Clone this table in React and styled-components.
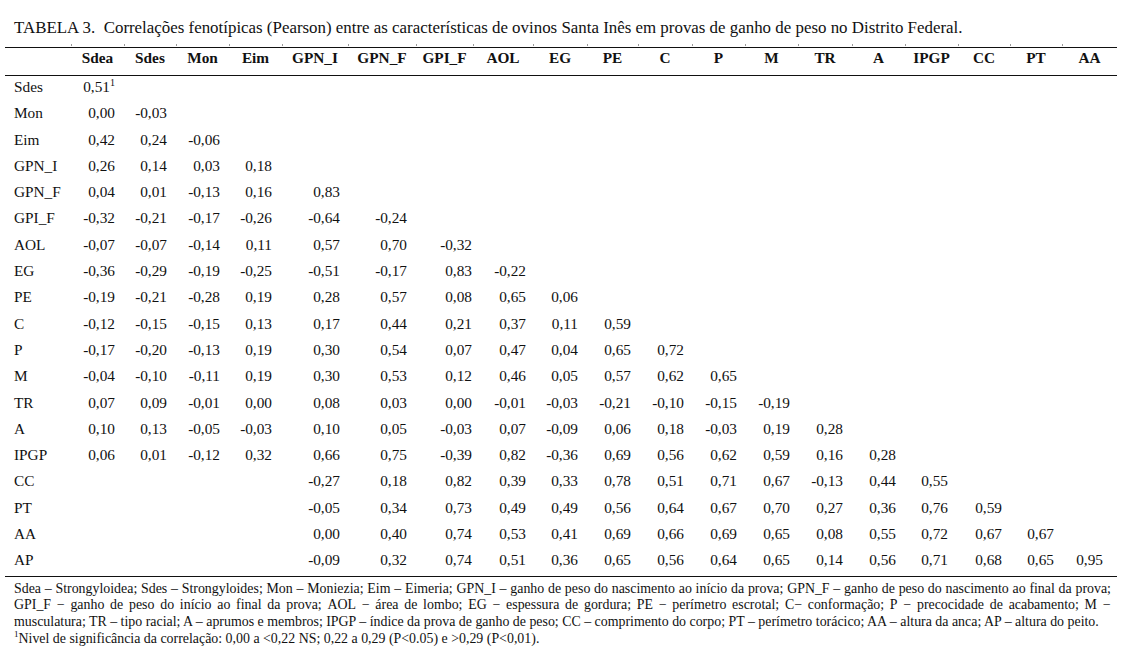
import React from 'react';
import styled, { createGlobalStyle } from 'styled-components';

const serif = `"Liberation Serif", "Times New Roman", Times, serif`;

const GlobalStyle = createGlobalStyle`
  html, body {
    margin: 0;
    padding: 0;
    background: #ffffff;
  }
  body {
    font-family: ${serif};
    color: #111;
  }
`;

const Page = styled.div`
  width: 1124px;
  height: 659px;
  padding-top: 18px;
  box-sizing: border-box;
  overflow: hidden;
  font-family: ${serif};
`;

const Title = styled.div`
  margin-left: 14px;
  font-size: 16.9px;
  line-height: 20px;
  white-space: nowrap;
`;

const Table = styled.table`
  margin: 9px 0 0 5px;
  width: 1112px;
  border-collapse: collapse;
  table-layout: fixed;
  font-family: ${serif};
  font-size: 15.3px;
`;

const HeadCell = styled.th`
  position: relative;
  height: 26px;
  padding: 1px 0 0;
  vertical-align: top;
  line-height: 17px;
  font-weight: bold;
  text-align: center;
  border-top: 1.5px solid #111;
  border-bottom: 1.5px solid #111;
  white-space: nowrap;

  &::before {
    content: '';
    display: ${(p) => (p.$tick ? 'block' : 'none')};
    position: absolute;
    left: 0;
    top: -4px;
    width: 1px;
    height: 2px;
    background: #9a9a9a;
  }
`;

const Row = styled.tr`
  & > td {
    border-bottom: ${(p) => (p.$last ? '1px solid #111' : 'none')};
  }
`;

const Label = styled.td`
  height: 24.3px;
  padding: 2px 0 0 9px;
  vertical-align: top;
  line-height: 17px;
  text-align: left;
  white-space: nowrap;
`;

const Value = styled.td`
  height: 24.3px;
  padding: 2px ${(p) => p.$pad}px 0 0;
  vertical-align: top;
  line-height: 17px;
  text-align: right;
  white-space: nowrap;
`;

const Sup = styled.sup`
  font-size: ${(p) => (p.$small ? 9 : 10)}px;
  line-height: 0;
  vertical-align: 6px;
`;

const Notes = styled.div`
  margin: 4px 0 0 14px;
  width: 1097px;
  font-size: 13.9px;
  line-height: 16.7px;
`;

const JustifiedLine = styled.div`
  display: flex;
  justify-content: space-between;
  white-space: nowrap;
`;

const NoteLine = styled.div`
  white-space: nowrap;
`;

const columns = [
  { name: 'Sdea', width: 53, pad: 9 },
  { name: 'Sdes', width: 52, pad: 9 },
  { name: 'Mon', width: 53, pad: 9 },
  { name: 'Eim', width: 53, pad: 10 },
  { name: 'GPN_I', width: 66, pad: 8 },
  { name: 'GPN_F', width: 68, pad: 9 },
  { name: 'GPI_F', width: 57, pad: 1 },
  { name: 'AOL', width: 60, pad: 7 },
  { name: 'EG', width: 54, pad: 9 },
  { name: 'PE', width: 51, pad: 7 },
  { name: 'C', width: 54, pad: 8 },
  { name: 'P', width: 53, pad: 8 },
  { name: 'M', width: 53, pad: 8 },
  { name: 'TR', width: 54, pad: 9 },
  { name: 'A', width: 53, pad: 9 },
  { name: 'IPGP', width: 53, pad: 10 },
  { name: 'CC', width: 52, pad: 8 },
  { name: 'PT', width: 52, pad: 8 },
  { name: 'AA', width: 55, pad: 14 },
];

const rows = [
  ['Sdes', ['0,51']],
  ['Mon', ['0,00', '-0,03']],
  ['Eim', ['0,42', '0,24', '-0,06']],
  ['GPN_I', ['0,26', '0,14', '0,03', '0,18']],
  ['GPN_F', ['0,04', '0,01', '-0,13', '0,16', '0,83']],
  ['GPI_F', ['-0,32', '-0,21', '-0,17', '-0,26', '-0,64', '-0,24']],
  ['AOL', ['-0,07', '-0,07', '-0,14', '0,11', '0,57', '0,70', '-0,32']],
  ['EG', ['-0,36', '-0,29', '-0,19', '-0,25', '-0,51', '-0,17', '0,83', '-0,22']],
  ['PE', ['-0,19', '-0,21', '-0,28', '0,19', '0,28', '0,57', '0,08', '0,65', '0,06']],
  ['C', ['-0,12', '-0,15', '-0,15', '0,13', '0,17', '0,44', '0,21', '0,37', '0,11', '0,59']],
  ['P', ['-0,17', '-0,20', '-0,13', '0,19', '0,30', '0,54', '0,07', '0,47', '0,04', '0,65', '0,72']],
  ['M', ['-0,04', '-0,10', '-0,11', '0,19', '0,30', '0,53', '0,12', '0,46', '0,05', '0,57', '0,62', '0,65']],
  ['TR', ['0,07', '0,09', '-0,01', '0,00', '0,08', '0,03', '0,00', '-0,01', '-0,03', '-0,21', '-0,10', '-0,15', '-0,19']],
  ['A', ['0,10', '0,13', '-0,05', '-0,03', '0,10', '0,05', '-0,03', '0,07', '-0,09', '0,06', '0,18', '-0,03', '0,19', '0,28']],
  ['IPGP', ['0,06', '0,01', '-0,12', '0,32', '0,66', '0,75', '-0,39', '0,82', '-0,36', '0,69', '0,56', '0,62', '0,59', '0,16', '0,28']],
  ['CC', ['', '', '', '', '-0,27', '0,18', '0,82', '0,39', '0,33', '0,78', '0,51', '0,71', '0,67', '-0,13', '0,44', '0,55']],
  ['PT', ['', '', '', '', '-0,05', '0,34', '0,73', '0,49', '0,49', '0,56', '0,64', '0,67', '0,70', '0,27', '0,36', '0,76', '0,59']],
  ['AA', ['', '', '', '', '0,00', '0,40', '0,74', '0,53', '0,41', '0,69', '0,66', '0,69', '0,65', '0,08', '0,55', '0,72', '0,67', '0,67']],
  ['AP', ['', '', '', '', '-0,09', '0,32', '0,74', '0,51', '0,36', '0,65', '0,56', '0,64', '0,65', '0,14', '0,56', '0,71', '0,68', '0,65', '0,95']],
];

// the first two lines of the legend are justified in the source
const justifiedNotes = [
  'Sdea – Strongyloidea; Sdes – Strongyloides; Mon – Moniezia; Eim – Eimeria; GPN_I – ganho de peso do nascimento ao início da prova; GPN_F – ganho de peso do nascimento ao final da prova;',
  'GPI_F − ganho de peso do início ao final da prova; AOL − área de lombo; EG − espessura de gordura; PE − perímetro escrotal; C− conformação; P − precocidade de acabamento; M −',
];

export default function App() {
  return (
    <Page>
      <GlobalStyle />
      <Title>
        TABELA 3.&nbsp; Correlações fenotípicas (Pearson) entre as características de ovinos Santa Inês em provas de ganho de peso no Distrito Federal.
      </Title>
      <Table>
        <colgroup>
          <col style={{ width: 66 }} />
          {columns.map((c) => (
            <col key={c.name} style={{ width: c.width }} />
          ))}
        </colgroup>
        <thead>
          <tr>
            <HeadCell />
            {columns.map((c) => (
              <HeadCell key={c.name} $tick>
                {c.name}
              </HeadCell>
            ))}
          </tr>
        </thead>
        <tbody>
          {rows.map(([label, values], r) => (
            <Row key={label} $last={r === rows.length - 1}>
              <Label>{label}</Label>
              {columns.map((c, i) => (
                <Value key={c.name} $pad={c.pad}>
                  {values[i] || ''}
                  {r === 0 && i === 0 && <Sup>1</Sup>}
                </Value>
              ))}
            </Row>
          ))}
        </tbody>
      </Table>
      <Notes>
        {justifiedNotes.map((line, i) => (
          <JustifiedLine key={i}>
            {line.split(' ').map((w, j) => (
              <span key={j}>{w}</span>
            ))}
          </JustifiedLine>
        ))}
        <NoteLine>
          musculatura; TR – tipo racial; A – aprumos e membros; IPGP – índice da prova de ganho de peso; CC – comprimento do corpo; PT – perímetro torácico; AA – altura da anca; AP – altura do peito.
        </NoteLine>
        <NoteLine>
          <Sup $small>1</Sup>Nivel de significância da correlação: 0,00 a &lt;0,22 NS; 0,22 a 0,29 (P&lt;0.05) e &gt;0,29 (P&lt;0,01).
        </NoteLine>
      </Notes>
    </Page>
  );
}
